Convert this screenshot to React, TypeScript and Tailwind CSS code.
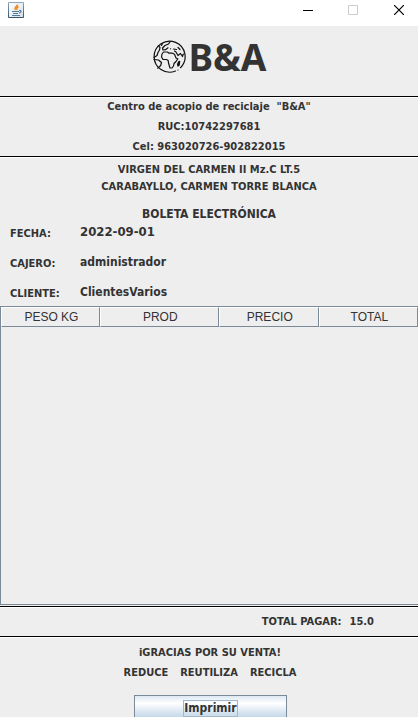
import type { ReactNode } from "react";

const columns = [
  { name: "PESO KG", width: "w-[23.700%]" },
  { name: "PROD", width: "w-[28.500%]" },
  { name: "PRECIO", width: "w-[24%]" },
  { name: "TOTAL", width: "w-[23.800%]" },
];

const fields = [
  { label: "FECHA:", value: "2022-09-01", size: "text-[13px]" },
  { label: "CAJERO:", value: "administrador", size: "text-xs" },
  { label: "CLIENTE:", value: "ClientesVarios", size: "text-xs" },
];

function JavaIcon() {
  return (
    <svg width="16" height="16" viewBox="0 0 16 16" aria-hidden="true">
      <defs>
        <linearGradient id="cup-frame" x1="0" y1="0" x2="0" y2="1">
          <stop offset="0" stopColor="#8ea9bd" />
          <stop offset="1" stopColor="#34536b" />
        </linearGradient>
        <linearGradient id="cup-face" x1="0" y1="0" x2="1" y2="1">
          <stop offset="0" stopColor="#ffffff" />
          <stop offset="1" stopColor="#d5dee6" />
        </linearGradient>
      </defs>
      <rect width="16" height="16" rx="1" fill="url(#cup-frame)" />
      <rect x="1" y="1" width="14" height="14" fill="url(#cup-face)" />
      <path d="M9.500 2.500C9.500 4.500 5.500 5 7.500 8M10.500 4.500C8 5.500 8.500 6.500 9 8" fill="none" stroke="#ef8a1d" strokeWidth="1.400" />
      <path d="M4 9.500h7M5 11.500h5M4 13.500h8M11 8.500h1.500q1.500 1.500-1.500 2.500" fill="none" stroke="#527a99" strokeWidth="1.100" />
    </svg>
  );
}

function GlobeIcon() {
  return (
    <svg width="34" height="34" viewBox="0 0 34 34" fill="none" stroke="#111" strokeWidth="1.200" strokeLinejoin="round" strokeLinecap="round" aria-hidden="true">
      <path d="M23.500 31A15.500 15.500 0 1 1 28.500 27.700M25.900 30h.1" />
      <path d="M10.500 3.500 9.500 5.500M6.500 5.800 8 7.500 7.500 10 6 12.500 5 15.500 2 17.500" />
      <path d="M2 19.500l4.500.5 3 2.500-.8 3-3 2.700" />
      <path d="M18 1.800 16.500 4 13 5.500 10.500 8l.5 2 2.500-.3L16 7.800" />
      <path d="M18.500 8.800h.1M21.500 9l3 .5M26 7.500l2 2" />
      <path d="M11.500 12h4l1.500 1.200 3-.2 2.500 1.300 1.500 3.700 1.800.8-1.800 2.700-2 2-.5 2.500-1.500 2h-2l-1.500-5-.3-2.500-1.700-1-3.500-.2L9.500 17l.5-3z" />
      <path d="m22.500 11 1.500 1 2 3.500 2.500-2 2 3 .5-2 1-.5" />
      <path d="m26.500 22 1.200-.7-.5 3.700-1.200 1.200-.4-2z" fill="#111" />
    </svg>
  );
}

/* Etched separator: dark line with a light one below. */
function Rule() {
  return <hr className="h-[2px] border-0 border-t border-black bg-white" />;
}

function Line({ children }: { children: ReactNode }) {
  return <p className="whitespace-pre text-[11px] leading-5">{children}</p>;
}

export default function App() {
  return (
    <div className="flex h-screen flex-col overflow-hidden bg-[#eeeeee] font-['DejaVu_Sans_Condensed','DejaVu_Sans',sans-serif] font-bold text-[#333333]">
      <header className="flex h-[26px] shrink-0 items-start justify-between bg-white pl-2">
        <div className="pt-[2px]">
          <JavaIcon />
        </div>
        <div className="-mr-1 flex">
          <button type="button" aria-label="Minimizar" className="flex h-5 w-11 items-center justify-center">
            <svg width="10" height="10" viewBox="0 0 10 10" stroke="#000"><path d="M0 5.500h10" /></svg>
          </button>
          <button type="button" aria-label="Maximizar" disabled className="flex h-5 w-[46px] items-center justify-center">
            <svg width="10" height="10" viewBox="0 0 10 10" fill="none" stroke="#ccc"><path d="M.5.500h9v9h-9z" /></svg>
          </button>
          <button type="button" aria-label="Cerrar" className="flex h-5 w-[46px] items-center justify-center">
            <svg width="10" height="10" viewBox="0 0 10 10" stroke="#000" strokeWidth="1.200"><path d="m0 0 10 10M10 0 0 10" /></svg>
          </button>
        </div>
      </header>

      <main className="flex flex-1 shrink-0 flex-col">
        <div className="flex h-[70px] items-center justify-center gap-[3px] pb-2">
          <GlobeIcon />
          <h1 className="font-['Noto_Sans','Open_Sans',sans-serif] text-[37px] leading-10">B&amp;A</h1>
        </div>
        <Rule />
        <section className="flex h-[58px] flex-col items-center justify-center">
          <Line>{'Centro de acopio de reciclaje  "B&A"'}</Line>
          <Line>RUC:10742297681</Line>
          <Line>Cel: 963020726-902822015</Line>
        </section>
        <Rule />
        <section className="flex flex-col items-center pt-[3px] text-[11px] leading-[17px]">
          <p>VIRGEN DEL CARMEN II Mz.C LT.5</p>
          <p>CARABAYLLO, CARMEN TORRE BLANCA</p>
        </section>
        <h2 className="pt-[9px] text-center text-xs leading-5">BOLETA ELECTRÓNICA</h2>
        <dl className="flex flex-col gap-[10px] px-[10px] pb-[2px]">
          {fields.map((field) => (
            <div key={field.label} className="flex h-5">
              <dt className="w-[70px] text-[11px] leading-5">{field.label}</dt>
              <dd className={`leading-4 ${field.size}`}>{field.value}</dd>
            </div>
          ))}
        </dl>

        <div className="h-[299px] border border-r-0 border-[#7a8a99]">
          <table className="w-full table-fixed border-separate border-spacing-0 font-['Liberation_Sans',Arial,sans-serif] text-xs font-normal">
            <thead>
              <tr>
                {columns.map((column) => (
                  <th key={column.name} scope="col" className={`h-5 border-t border-r border-b border-l border-t-white border-r-[#7a8a99] border-b-[#7a8a99] border-l-white p-0 pl-[2px] text-center font-normal leading-[18px] ${column.width}`}>
                    {column.name}
                  </th>
                ))}
              </tr>
            </thead>
            <tbody />
          </table>
        </div>

        <div className="pt-[1px]">
          <Rule />
        </div>
        <div className="flex h-7 items-center justify-end gap-2 pr-11 text-[11px]">
          <span>TOTAL PAGAR:</span>
          <span>15.0</span>
        </div>
        <Rule />
        <section className="flex flex-col items-center pt-[5px] pl-[2px]">
          <Line>iGRACIAS POR SU VENTA!</Line>
          <p className="flex gap-3 text-[11px] leading-5">
            <span>REDUCE</span>
            <span>REUTILIZA</span>
            <span>RECICLA</span>
          </p>
        </section>
        <div className="flex justify-center pt-3 pl-[3px]">
          <button type="button" className="flex h-[26px] w-[153px] items-center justify-center border border-[#7a8a99] bg-linear-to-b from-[#dde8f3] via-white via-30% to-[#b8cfe5] text-xs">
            <span className="border border-[#a3b8cc] leading-[15px]">Imprimir</span>
          </button>
        </div>
      </main>
    </div>
  );
}
